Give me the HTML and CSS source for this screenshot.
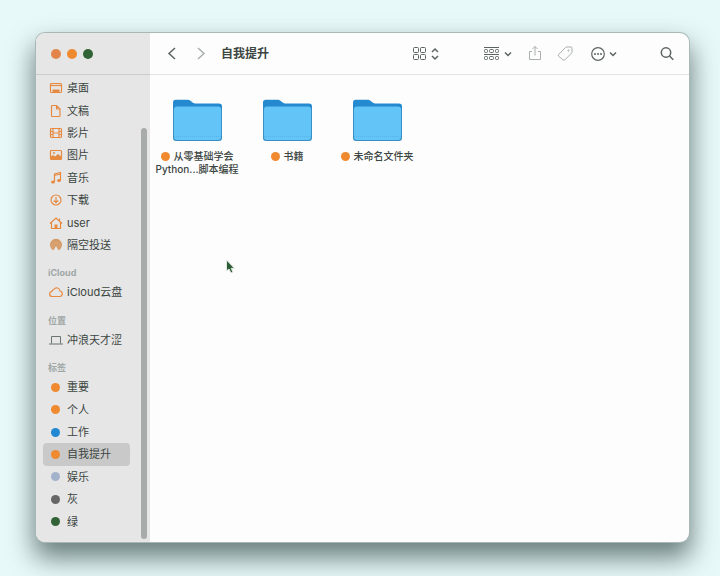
FILE: index.html
```html
<!DOCTYPE html>
<html lang="zh-CN">
<head>
<meta charset="utf-8">
<title>自我提升</title>
<link rel="stylesheet" href="styles.css">
</head>
<body>
	<div class="window">
		<aside class="sidebar">
			<div class="lights">
				<button class="light close" type="button" aria-label="关闭"></button>
				<button class="light minimize" type="button" aria-label="最小化"></button>
				<button class="light zoom" type="button" aria-label="缩放"></button>
			</div>
			<nav class="places">
				<a href="#desktop"><svg class="icon" viewBox="0 0 14 14"><rect x="1.5" y="2.5" width="11" height="9" rx="1"/><path d="M1.5 4.5h11"/><path class="solid" d="M3.5 8.5h7v2.5h-7z"/></svg>桌面</a>
				<a href="#documents"><svg class="icon" viewBox="0 0 14 14"><path d="M2.5 2.500a1 1 0 0 1 1-1h4l3.500 3.500v6.500a1 1 0 0 1-1 1H3.500a1 1 0 0 1-1-1zM7.500 1.500V5H11"/></svg>文稿</a>
				<a href="#movies"><svg class="icon" viewBox="0 0 14 14"><rect x="1.5" y="2.5" width="11" height="9" rx="1"/><path d="M4 2.5v9M10 2.5v9M4 7h6M1.5 5.5H4M1.5 8.5H4M10 5.5h2.5M10 8.5h2.5"/></svg>影片</a>
				<a href="#pictures"><svg class="icon" viewBox="0 0 14 14"><rect x="1.5" y="2.5" width="11" height="9" rx="1"/><path class="solid" d="M2 8.5l2-1.500 2 1.500L9 6l3 2.500v3H2z"/><circle class="solid" cx="5" cy="5" r="1"/></svg>图片</a>
				<a href="#music"><svg class="icon" viewBox="0 0 14 14"><path d="M5.500 10.500V3l6-1.500v8M5.500 4.500l6-1.500"/><ellipse class="solid" cx="4" cy="11" rx="2" ry="1.5"/><ellipse class="solid" cx="10" cy="9.5" rx="2" ry="1.5"/></svg>音乐</a>
				<a href="#downloads"><svg class="icon" viewBox="0 0 14 14"><circle cx="7" cy="7" r="5"/><path d="M7 4v5.5M4.800 7.500L7 9.700l2.200-2.200"/></svg>下载</a>
				<a href="#user"><svg class="icon" viewBox="0 0 14 14"><path d="M1 7.500L7 2l6 5.500M10.500 5V2.500M2.500 6.500v6h9v-6"/><path class="solid" d="M5.500 8.500h3v4h-3z"/></svg>user</a>
				<a href="#airdrop"><svg class="icon airdrop" viewBox="0 0 14 14"><path class="solid" d="M4.500 12.300L7 8l2.500 4.300A6 6 0 1 0 4.500 12.300z"/><path class="ring" d="M4 10.500a4 4 0 1 1 6 0M5.500 9a2 2 0 1 1 3 0"/></svg>隔空投送</a>

				<h2>iCloud</h2>
				<a href="#icloud"><svg class="icon" viewBox="0 0 14 14"><path d="M3.300 11.500a2.500 2.500 0 0 1-.3-5 1.900 1.900 0 0 1 1.900-2A3.300 3.300 0 0 1 11 6a2.800 2.800 0 0 1 0 5.500z"/></svg>iCloud云盘</a>

				<h2>位置</h2>
				<a href="#mac"><svg class="icon gray" viewBox="0 0 14 14"><path d="M2.5 10.500v-7h9v7M0 11h14"/></svg>冲浪天才涩</a>

				<h2>标签</h2>
				<a href="#important"><span class="dot"></span>重要</a>
				<a href="#personal"><span class="dot"></span>个人</a>
				<a href="#work"><span class="dot blue"></span>工作</a>
				<a href="#self" class="selected"><span class="dot"></span>自我提升</a>
				<a href="#fun"><span class="dot pale"></span>娱乐</a>
				<a href="#gray"><span class="dot dark"></span>灰</a>
				<a href="#green"><span class="dot green"></span>绿</a>
			</nav>
			<div class="scrollbar"></div>
		</aside>

		<main class="content">
			<header class="toolbar">
				<button class="tool back" type="button" aria-label="后退"><svg width="16" height="16" viewBox="0 0 16 16"><path d="M11 2L5 7.500l6 5.500"/></svg></button>
				<button class="tool forward" type="button" aria-label="前进"><svg width="16" height="16" viewBox="0 0 16 16"><path d="M5 2l6 5.500L5 13"/></svg></button>
				<h1>自我提升</h1>
				<button class="tool view" type="button" aria-label="显示">
					<svg width="16" height="16" viewBox="0 0 16 16"><rect x="1.5" y="1.5" width="5" height="5" rx="1"/><rect x="8.5" y="1.5" width="5" height="5" rx="1"/><rect x="1.5" y="8.5" width="5" height="5" rx="1"/><rect x="8.5" y="8.5" width="5" height="5" rx="1"/></svg>
					<svg class="arrow" width="10" height="16" viewBox="0 0 10 16"><path d="M2 6l3-3 3 3M2 10l3 3 3-3"/></svg>
				</button>
				<button class="tool group" type="button" aria-label="群组">
					<svg width="18" height="16" viewBox="0 0 18 16"><path d="M1 1.500h15M1 8.500h15"/><rect x="1.500" y="3.500" width="3" height="3" rx="1"/><rect x="6.500" y="3.500" width="4" height="3" rx="1"/><rect x="12.500" y="3.500" width="3" height="3" rx="1"/><rect x="1.500" y="10.500" width="3" height="3" rx="1"/><rect x="6.500" y="10.500" width="4" height="3" rx="1"/><rect x="12.500" y="10.500" width="3" height="3" rx="1"/></svg>
					<svg class="arrow" width="10" height="16" viewBox="0 0 10 16"><path d="M2 6.500l3 3 3-3"/></svg>
				</button>
				<button class="tool share" type="button" aria-label="共享"><svg width="16" height="16" viewBox="0 0 16 16"><path d="M5 5.500H2.500v8h11v-8H11M8 9.500V.5M5.500 3L8 .5 10.500 3"/></svg></button>
				<button class="tool tag" type="button" aria-label="标签"><svg width="16" height="16" viewBox="0 0 16 16"><path d="M1.500 8.500L8.500 1.500a2 2 0 0 1 1.300-.5H14a1 1 0 0 1 1 1v4a2 2 0 0 1-.6 1.300l-6.600 6.600a1.200 1.200 0 0 1-1.700 0L1.500 10.100a1.200 1.200 0 0 1 0-1.600z"/><circle cx="11.500" cy="4.500" r=".6"/></svg></button>
				<button class="tool more" type="button" aria-label="更多">
					<svg width="16" height="16" viewBox="0 0 16 16"><circle cx="8" cy="8" r="6.300"/><circle class="pip" cx="5" cy="8" r="1"/><circle class="pip" cx="8" cy="8" r="1"/><circle class="pip" cx="11" cy="8" r="1"/></svg>
					<svg class="arrow" width="10" height="16" viewBox="0 0 10 16"><path d="M2 6.500l3 3 3-3"/></svg>
				</button>
				<button class="tool search" type="button" aria-label="搜索"><svg width="16" height="16" viewBox="0 0 16 16"><circle cx="7" cy="6.500" r="4.700"/><path d="M10.500 10l3.800 3.800"/></svg></button>
			</header>

			<svg class="defs" width="0" height="0">
				<symbol id="folder" viewBox="0 0 49 43">
					<path fill="#2589cf" d="M0 3.500A2.800 2.800 0 0 1 2.800.7h11.700c1.200 0 2 .3 2.900 1l2.600 2c.8.600 1.300.8 2.200.8H46a3 3 0 0 1 3 3V38H0z"/>
					<path fill="#3a8fc4" d="M0 11a3 3 0 0 1 3-3h43a3 3 0 0 1 3 3v28a3 3 0 0 1-3 3H3a3 3 0 0 1-3-3z"/>
					<path fill="#63c4f8" d="M1 10.500A3 3 0 0 1 4 7.500h41a3 3 0 0 1 3 3V38a3 3 0 0 1-3 3H4a3 3 0 0 1-3-3z"/>
					<path stroke="#54b3e8" stroke-width="1" stroke-dasharray="1 1" d="M1 37.500h47"/>
				</symbol>
			</svg>
			<ul class="files">
				<li>
					<svg class="folder"><use href="#folder"/></svg>
					<p><span class="dot"></span>从零基础学会<br>Python...脚本编程</p>
				</li>
				<li>
					<svg class="folder"><use href="#folder"/></svg>
					<p><span class="dot"></span>书籍</p>
				</li>
				<li>
					<svg class="folder"><use href="#folder"/></svg>
					<p><span class="dot"></span>未命名文件夹</p>
				</li>
			</ul>
			<svg class="cursor" width="10" height="15" viewBox="0 0 10 15"><path d="M.5 0v11l2.500-2 1.900 4 2-1-1.700-3.700H8.500z"/></svg>
		</main>
	</div>
</body>
</html>
```
FILE: styles.css
```css
*{
	box-sizing:border-box;
}
body{
	margin:0;
	min-height:100vh;
	padding:33px 31px 34px 36px;
	display:flex;
	background-color:#e8f9f9;
	font-family:Inter, "Noto Sans CJK SC", sans-serif;
	font-size:11px;
	color:#3b4541;
}
h1, h2, p, ul{
	margin:0;
	padding:0;
}
button{
	border:0;
	padding:0;
	background:none;
}
svg{
	fill:none;
	flex:none;
}
.window{
	flex:1;
	display:flex;
	border-radius:9px;
	background-color:#fdfdfd;
	box-shadow:0 0 0 1px #a9b8b6, 0 14px 26px 2px rgba(40,60,60,.65);
}

/* sidebar */
.sidebar{
	position:relative;
	flex:none;
	width:114px;
	display:flex;
	flex-direction:column;
	background-color:#e6e6e6;
	border-radius:9px 0 0 9px;
}
.lights{
	display:flex;
	align-items:center;
	gap:6px;
	height:42px;
	padding-left:15px;
	border-bottom:1px solid #cbcdcd;
}
.light{
	width:10px;
	height:10px;
	border-radius:50%;
}
.close{
	background-color:#e2854a;
}
.minimize{
	background-color:#f08a30;
}
.zoom{
	background-color:#326336;
}
.places{
	flex:1;
	display:flex;
	flex-direction:column;
	padding:2px 20px 9px 7px;
}
.places a{
	flex:1 0 22px;
	display:flex;
	align-items:center;
	gap:4px;
	padding-left:6px;
	line-height:16px;
	border-radius:4px;
	color:inherit;
	text-decoration:none;
	white-space:nowrap;
}
.places a.selected{
	background-color:#c9c9c9;
}
.places h2{
	padding:9px 0 0 5px;
	font-size:9px;
	line-height:16px;
	color:#a0a8a6;
}
.icon{
	width:14px;
	height:14px;
	stroke:#e68a42;
	stroke-width:1.2;
}
.icon .solid{
	fill:#e68a42;
	stroke:none;
}
.icon.gray{
	stroke:#6b7472;
	stroke-width:1;
}
.airdrop .solid{
	fill:#d59a68;
}
.airdrop .ring{
	stroke:#e3b48c;
	stroke-width:.5;
}
.dot{
	display:inline-block;
	flex:none;
	width:9px;
	height:9px;
	border-radius:50%;
	background-color:#f08a30;
}
.places .dot{
	margin:0 3px 0 2px;
}
.dot.blue{
	background-color:#2288d2;
}
.dot.pale{
	background-color:#a3b3cb;
}
.dot.dark{
	background-color:#666;
}
.dot.green{
	background-color:#326336;
}
.scrollbar{
	position:absolute;
	top:95px;
	right:3px;
	bottom:3px;
	width:6px;
	border-radius:3px;
	background-color:#a9abab;
}

/* content */
.content{
	position:relative;
	flex:1;
}
.toolbar{
	display:flex;
	align-items:center;
	height:42px;
	padding:0 14px;
	border-bottom:1px solid #e3e5e5;
}
.toolbar h1{
	flex:1;
	margin-left:12px;
	font-size:12px;
	line-height:18px;
}
.tool{
	display:flex;
	align-items:center;
	gap:2px;
	stroke:#5c6462;
}
.tool .arrow{
	stroke-width:1.5;
}
.back{
	stroke-width:1.5;
}
.forward{
	margin-left:13px;
	stroke:#a9afad;
	stroke-width:1.5;
}
.view{
	margin-right:43px;
}
.share, .tag{
	margin-left:14px;
	stroke:#a9afad;
}
.more{
	margin:0 41px 0 17px;
	stroke-width:1.2;
}
.pip{
	fill:#5c6462;
	stroke:none;
}
.search{
	stroke-width:1.5;
}
.defs{
	position:absolute;
}
.files{
	display:flex;
	flex-wrap:wrap;
	padding:24px 2px;
	list-style:none;
}
.files li{
	width:90px;
	text-align:center;
	font-size:10px;
	line-height:13px;
	font-weight:500;
	white-space:nowrap;
}
.folder{
	display:block;
	width:49px;
	height:43px;
	margin:0 auto 8px;
}
.files .dot{
	margin-right:4px;
	vertical-align:-1px;
}
.cursor{
	position:absolute;
	left:76px;
	top:227px;
	fill:#2c5c33;
	stroke:#e4e8e4;
}
```
